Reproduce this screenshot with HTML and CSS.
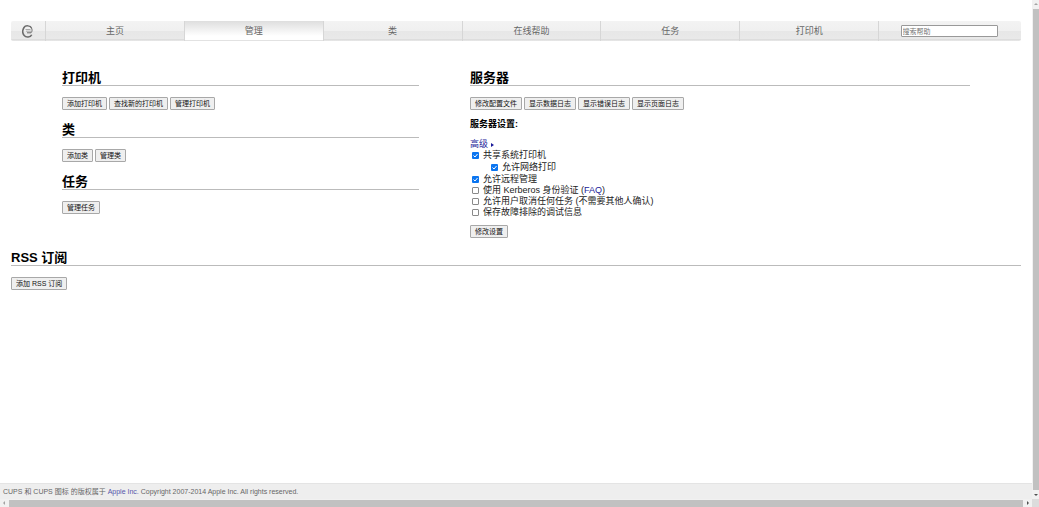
FILE: index.html
```html
<!DOCTYPE html>
<html lang="zh-CN">
<head>
<meta charset="utf-8">
<title>管理 - CUPS</title>
<link rel="stylesheet" href="styles.css">
</head>
<body>
<div class="viewport">
  <div class="page">
    <nav class="nav">
      <a class="tab logo" href="#" aria-label="CUPS">
        <svg viewBox="0 0 11 13" width="11" height="13" fill="none" stroke="#6a6a6a">
          <path d="M9.500 3C8.500 .5 3.500 0 2 2.500C.5 5 .5 8.500 2.200 10.500C4 12.800 8.500 12.500 9.700 9.700" stroke-width="1.500"/>
          <path d="M9.500 3c.8 1.500 .8 3.500 -.5 4.800H5"/>
          <path d="M3.500 4.500h5M4 6.200h5" stroke="#aaa"/>
        </svg>
      </a>
      <a class="tab" href="#">主页</a>
      <a class="tab active" href="#">管理</a>
      <a class="tab" href="#">类</a>
      <a class="tab" href="#">在线帮助</a>
      <a class="tab" href="#">任务</a>
      <a class="tab" href="#">打印机</a>
      <form class="tab search"><input class="query" type="text" placeholder="搜索帮助" aria-label="搜索帮助"></form>
    </nav>
    <main class="main">
      <div class="columns">
        <div class="column">
          <section class="section">
            <h2 class="title">打印机</h2>
            <div class="buttons"><button class="btn">添加打印机</button><button class="btn">查找新的打印机</button><button class="btn">管理打印机</button></div>
          </section>
          <section class="section">
            <h2 class="title">类</h2>
            <div class="buttons"><button class="btn">添加类</button><button class="btn">管理类</button></div>
          </section>
          <section class="section">
            <h2 class="title">任务</h2>
            <div class="buttons"><button class="btn">管理任务</button></div>
          </section>
        </div>
        <section class="section">
          <h2 class="title">服务器</h2>
          <div class="buttons"><button class="btn">修改配置文件</button><button class="btn">显示数据日志</button><button class="btn">显示错误日志</button><button class="btn">显示页面日志</button></div>
          <form class="settings">
            <h3 class="subtitle">服务器设置:</h3>
            <a class="link advanced" href="#">高级 <span class="arrow"></span></a>
            <label class="option"><input class="check" type="checkbox" checked>共享系统打印机</label>
            <label class="option nested"><input class="check" type="checkbox" checked>允许网络打印</label>
            <label class="option"><input class="check" type="checkbox" checked>允许远程管理</label>
            <div class="option"><input class="check" type="checkbox" id="kerberos"><label for="kerberos">使用 Kerberos 身份验证</label>&nbsp;(<a class="link" href="#">FAQ</a>)</div>
            <label class="option"><input class="check" type="checkbox">允许用户取消任何任务 (不需要其他人确认)</label>
            <label class="option"><input class="check" type="checkbox">保存故障排除的调试信息</label>
            <div class="buttons"><button class="btn" type="button">修改设置</button></div>
          </form>
        </section>
      </div>
      <section class="section">
        <h2 class="title">RSS 订阅</h2>
        <div class="buttons"><button class="btn">添加 RSS 订阅</button></div>
      </section>
    </main>
    <footer class="footer">CUPS 和 CUPS 图标 的版权属于 <a class="credit" href="#">Apple Inc.</a> Copyright 2007-2014 Apple Inc. All rights reserved.</footer>
  </div>
  <div class="vbar" aria-hidden="true"><span class="point up"></span><span class="thumb"></span><span class="point down"></span></div>
  <div class="hbar" aria-hidden="true"><span class="point left"></span><span class="thumb"></span><span class="point right"></span></div>
  <div class="corner"></div>
</div>
</body>
</html>
```
FILE: styles.css
```css
* { box-sizing: border-box; }
body {
  margin: 0;
  background: #fff;
  color: #222;
  font-family: "Liberation Sans", "Noto Sans CJK SC", sans-serif;
  font-size: 9px;
  line-height: 11px;
}
.viewport {
  display: grid;
  grid-template-columns: minmax(0, 1fr) 7px;
  grid-template-rows: 1fr 8px;
  min-height: 100vh;
}
.page { display: flex; flex-direction: column; }

.nav {
  display: grid;
  grid-template-columns: 35fr repeat(6, 139fr) 142fr;
  height: 20px;
  margin: 21px 11px 0;
  border-radius: 2px;
  background: linear-gradient(#f3f3f3 0%, #f0f0f0 48%, #e7e7e7 52%, #e9e9e9 88%, #dcdcdc 92%, #e8e8e8 100%);
}
.tab {
  display: flex;
  align-items: center;
  justify-content: center;
  padding-top: 1px;
  border-right: 1px solid #d6d6d6;
  color: #666;
  text-decoration: none;
}
.tab.logo { padding-top: 0; }
.tab.active {
  background: linear-gradient(#dedede, #fff 75%);
  box-shadow: inset 0 -1px #e2e2e2;
}
.tab.search { padding-top: 0; padding-right: 2px; border-right: 0; }
.query {
  width: 97px;
  height: 12px;
  padding: 0 1px;
  border: 1px solid #999;
  border-radius: 1px;
  background: #fff;
  font: 7px/10px "Liberation Sans", "Noto Sans CJK SC", sans-serif;
}
.query::placeholder { color: #757575; }

.main { flex: 1; display: flex; flex-direction: column; gap: 11px; padding: 28px 11px 11px; }
.columns { display: grid; grid-template-columns: 357fr 500fr; gap: 51px; padding: 0 51px; }
.column { display: flex; flex-direction: column; gap: 11px; }
.title {
  margin: 0 0 11px;
  padding-top: 2px;
  border-bottom: 1px solid #bbb;
  color: #000;
  font-size: 13px;
  line-height: 14px;
}
.buttons { display: flex; gap: 2px; }
.btn {
  height: 13px;
  padding: 0 4px;
  border: 1px solid #a8a8a8;
  border-radius: 1px;
  background: #efefef;
  color: #111;
  font: 7px/10px "Liberation Sans", "Noto Sans CJK SC", sans-serif;
}
.settings { display: flex; flex-direction: column; align-items: flex-start; margin-top: 9px; }
.subtitle { margin: 0 0 9px; color: #000; font-size: 9px; line-height: 11px; }
.link { color: #1a1a99; text-decoration: none; }
.advanced { display: flex; align-items: center; gap: 3px; }
.arrow { border-left: 3px solid #1a1a99; border-top: 2px solid transparent; border-bottom: 2px solid transparent; }
.option { display: flex; align-items: center; }
.nested { margin: 1px 0 1px 19px; }
.check {
  appearance: none;
  width: 7px;
  height: 7px;
  margin: 0 4px 0 2px;
  border: 1px solid #8a8a8a;
  border-radius: 1px;
  background: #fff;
}
.check:checked {
  border: 0;
  background: #0b75f0 url("data:image/svg+xml,%3Csvg xmlns='http://www.w3.org/2000/svg' viewBox='0 0 14 14'%3E%3Cpath d='M3 7l3 3 5-6' fill='none' stroke='white' stroke-width='2'/%3E%3C/svg%3E");
}
.settings .buttons { margin-top: 7px; }

.footer {
  padding: 3px 3px 2px;
  border-top: 1px solid #e4e4e4;
  background: #eee;
  color: #666;
  font-size: 7px;
  line-height: 10px;
}
.credit { color: #55a; text-decoration: none; }

.vbar, .hbar { display: flex; align-items: center; gap: 4px; background: #f1f1f1; }
.vbar { flex-direction: column; padding: 3px 0; }
.hbar { padding: 0 3px; }
.thumb { flex: 1; background: #c1c1c1; }
.vbar .thumb { width: 6px; }
.hbar .thumb { height: 7px; }
.corner { background: #dcdcdc; }
.point { border: 2px solid transparent; }
.up { border-top: 0; border-bottom-color: #a3a3a3; }
.down { border-bottom: 0; border-top-color: #505050; }
.left { border-left: 0; border-right-color: #a3a3a3; }
.right { border-right: 0; border-left-color: #505050; }
```
